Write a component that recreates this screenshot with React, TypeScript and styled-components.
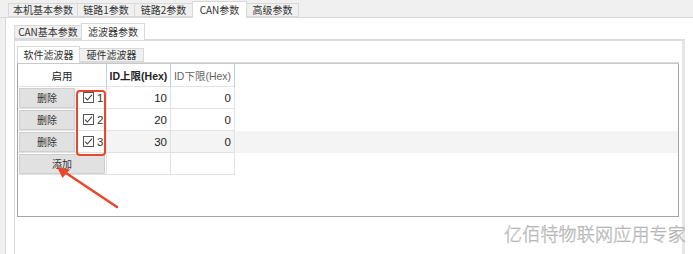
import styled, { createGlobalStyle } from 'styled-components';

const GlobalStyle = createGlobalStyle`
  html, body {
    margin: 0;
    padding: 0;
    background: #f0f0f0;
  }
  * {
    box-sizing: border-box;
  }
`;

const topTabs = [
  { label: '本机基本参数', width: 70 },
  { label: '链路1参数', width: 58 },
  { label: '链路2参数', width: 59 },
  { label: 'CAN参数', width: 55, active: true },
  { label: '高级参数', width: 53 },
];

const filterRows = [
  { id: 1, upper: '10', lower: '0' },
  { id: 2, upper: '20', lower: '0' },
  { id: 3, upper: '30', lower: '0', shaded: true },
];

export default function App() {
  return (
    <>
      <GlobalStyle />
      <Window>
        <TabBar>
          {topTabs.map((t) => (
            <Tab key={t.label} $active={t.active} $width={t.width}>
              {t.label}
            </Tab>
          ))}
        </TabBar>

        <OuterPage>
          <SubTabBar>
            <Tab $width={68}>CAN基本参数</Tab>
            <Tab $width={64} $active>
              滤波器参数
            </Tab>
          </SubTabBar>

          <InnerPage>
            <SubTabBar>
              <Tab $width={63} $active>
                软件滤波器
              </Tab>
              <Tab $width={65}>硬件滤波器</Tab>
            </SubTabBar>

            <Grid>
              <HeaderRow>
                <HeadCell $width={89}>启用</HeadCell>
                <HeadCell $width={64} $bold>
                  ID上限(Hex)
                </HeadCell>
                <HeadCell $width={64} $muted>
                  ID下限(Hex)
                </HeadCell>
              </HeaderRow>

              {filterRows.map((r) => (
                <Row key={r.id} $shaded={r.shaded}>
                  <FirstCell>
                    <GridButton $width={56}>删除</GridButton>
                    <Check>
                      <CheckBox>
                        <svg width="9" height="9" viewBox="0 0 9 9">
                          <path d="M1 4.6 L3.4 7 L8 1.6" fill="none" stroke="#444" strokeWidth="1.1" />
                        </svg>
                      </CheckBox>
                      {r.id}
                    </Check>
                  </FirstCell>
                  <ValueCell>{r.upper}</ValueCell>
                  <ValueCell>{r.lower}</ValueCell>
                </Row>
              ))}

              <Row>
                <FirstCell>
                  <GridButton $width={86}>添加</GridButton>
                </FirstCell>
                <ValueCell />
                <ValueCell />
              </Row>
            </Grid>
          </InnerPage>
        </OuterPage>

        <Highlight />
        <Arrow width="70" height="50" viewBox="0 0 70 50">
          <line x1="63" y1="44" x2="9" y2="8" stroke="#e9472c" strokeWidth="2.6" strokeLinecap="round" />
          <path d="M3 4 L16 6.5 L8.5 15 Z" fill="#e9472c" />
        </Arrow>
        <Watermark>亿佰特物联网应用专家</Watermark>
      </Window>
    </>
  );
}

const Window = styled.div`
  position: relative;
  width: 693px;
  height: 254px;
  overflow: hidden;
  background: #f0f0f0;
  font-family: 'Noto Sans CJK SC', 'Liberation Sans', sans-serif;
  font-size: 10px;
  color: #333;
  display: flex;
  flex-direction: column;
`;

const TabBar = styled.div`
  height: 18px;
  padding-left: 8px;
  display: flex;
  align-items: flex-end;
  border-bottom: 1px solid #d9d9d9;
`;

const SubTabBar = styled.div`
  height: 16px;
  display: flex;
  align-items: flex-end;
  border-bottom: 1px solid #dadada;
`;

const Tab = styled.div<{ $active?: boolean; $width: number }>`
  width: ${(p) => p.$width}px;
  height: ${(p) => (p.$active ? '17px' : '14px')};
  margin-bottom: ${(p) => (p.$active ? '-1px' : '0')};
  display: flex;
  align-items: center;
  justify-content: center;
  line-height: 1;
  background: ${(p) => (p.$active ? '#ffffff' : '#f0f0f0')};
  border: 1px solid #d9d9d9;
  border-bottom: ${(p) => (p.$active ? 'none' : '1px solid #d9d9d9')};
  margin-right: -1px;
  white-space: nowrap;
  position: relative;
  z-index: ${(p) => (p.$active ? 1 : 0)};
`;

const OuterPage = styled.div`
  flex: 1;
  margin-left: 5px;
  background: #ffffff;
  border-left: 1px solid #d6d6d6;
  padding: 6px 8px 0 8px;
  display: flex;
  flex-direction: column;
`;

const InnerPage = styled.div`
  flex: 1;
  background: #ffffff;
  border: 1px solid #dcdcdc;
  border-bottom: none;
  border-right: 3px solid #e6e6e6;
  padding: 6px 3px 0 2px;
  display: flex;
  flex-direction: column;
`;

const Grid = styled.div`
  height: 154px;
  background: #ffffff;
  border: 1px solid #a3a3a3;
  border-top-color: #c8c8c8;
  display: flex;
  flex-direction: column;
`;

const HeaderRow = styled.div`
  height: 23px;
  display: flex;
`;

const HeadCell = styled.div<{ $width: number; $bold?: boolean; $muted?: boolean }>`
  width: ${(p) => p.$width}px;
  display: flex;
  align-items: center;
  justify-content: center;
  font-family: 'Liberation Sans', 'Noto Sans CJK SC', sans-serif;
  font-size: 10.5px;
  font-weight: ${(p) => (p.$bold ? 700 : 400)};
  color: ${(p) => (p.$muted ? '#666' : '#222')};
  border-right: 1px solid #bcd0e4;
  border-bottom: 1px solid #e2e2e2;
`;

const Row = styled.div<{ $shaded?: boolean }>`
  height: 22px;
  display: flex;
  background: ${(p) => (p.$shaded ? '#f4f4f4' : '#ffffff')};
`;

const FirstCell = styled.div`
  width: 89px;
  display: flex;
  align-items: center;
  border-right: 1px solid #e2e2e2;
  border-bottom: 1px solid #e2e2e2;
  background: #ffffff;
`;

const GridButton = styled.div<{ $width: number }>`
  width: ${(p) => p.$width}px;
  height: 20px;
  margin-left: 1px;
  display: flex;
  align-items: center;
  justify-content: center;
  background: #e1e1e1;
  border: 1px solid #cfcfcf;
  color: #333;
`;

const Check = styled.div`
  display: flex;
  align-items: center;
  gap: 3px;
  margin-left: 8px;
  font-family: 'Liberation Sans', sans-serif;
  font-size: 11.5px;
  color: #333;
`;

const CheckBox = styled.div`
  width: 11px;
  height: 11px;
  border: 1px solid #555;
  display: flex;
  align-items: center;
  justify-content: center;
  background: #fff;
`;

const ValueCell = styled.div`
  width: 64px;
  display: flex;
  align-items: center;
  justify-content: flex-end;
  padding-right: 3px;
  font-family: 'Liberation Sans', sans-serif;
  font-size: 11.5px;
  color: #222;
  border-right: 1px solid #e2e2e2;
  border-bottom: 1px solid #e2e2e2;
`;

const Highlight = styled.div`
  position: absolute;
  left: 76px;
  top: 90px;
  width: 30px;
  height: 66px;
  border: 2px solid #e9472c;
  border-radius: 4px;
`;

const Arrow = styled.svg`
  position: absolute;
  left: 54px;
  top: 163px;
`;

const Watermark = styled.div`
  position: absolute;
  left: 504px;
  top: 222px;
  font-size: 18px;
  font-weight: 300;
  line-height: 22px;
  color: #ffffff;
  -webkit-text-stroke: 0.5px #a8a8a8;
  letter-spacing: 0.2px;
  white-space: nowrap;
`;
